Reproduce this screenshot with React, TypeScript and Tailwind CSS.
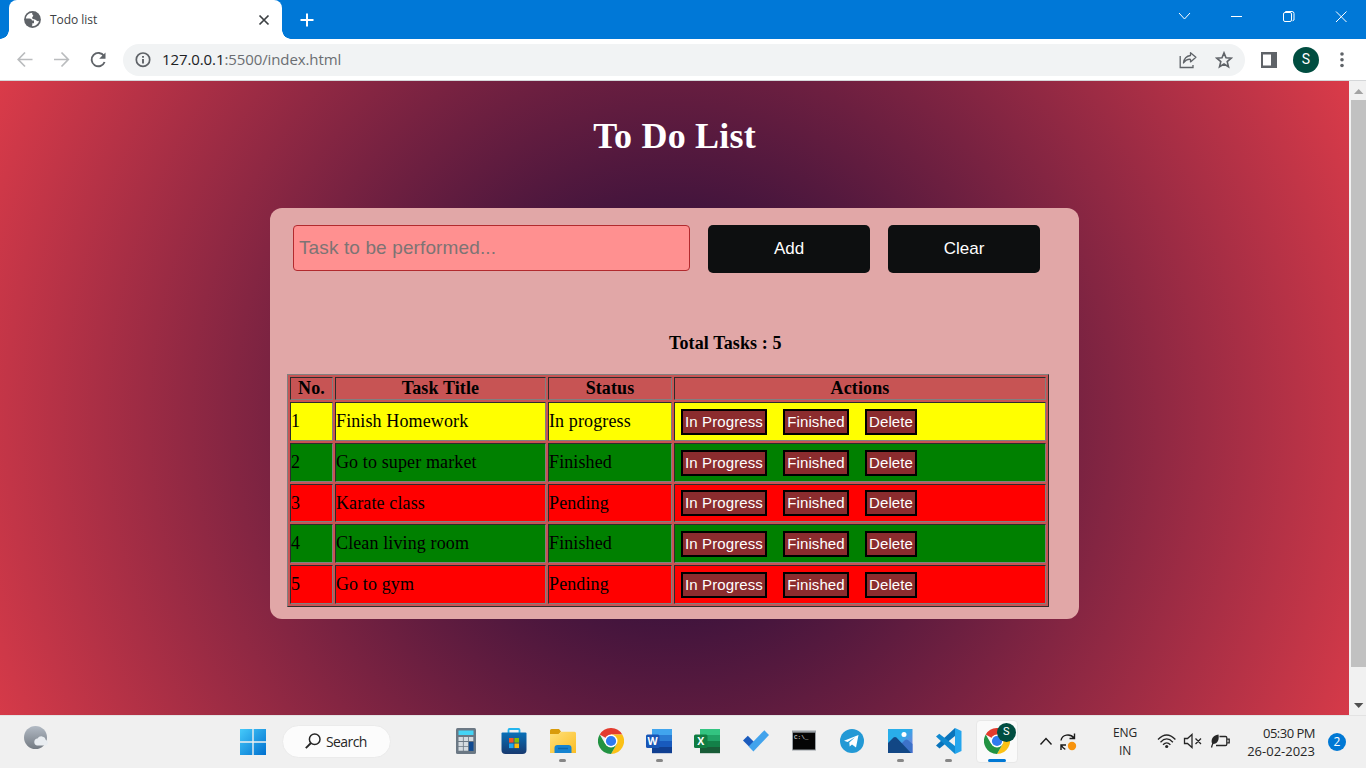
import React from "react";

const ui = "font-['Open_Sans','Noto_Sans',sans-serif]";
const serif = "font-['Liberation_Serif',serif]";
const sans = "font-['Liberation_Sans',sans-serif]";

type Status = "In progress" | "Finished" | "Pending";

const tasks: { title: string; status: Status }[] = [
  { title: "Finish Homework", status: "In progress" },
  { title: "Go to super market", status: "Finished" },
  { title: "Karate class", status: "Pending" },
  { title: "Clean living room", status: "Finished" },
  { title: "Go to gym", status: "Pending" },
];

const rowColor: Record<Status, string> = {
  "In progress": "bg-[#ffff00]",
  Finished: "bg-[#008000]",
  Pending: "bg-[#ff0000]",
};

const cellBorder =
  "border border-t-[#2c2c2c] border-l-[#2c2c2c] border-r-[#808080] border-b-[#808080]";

function TabStrip() {
  return (
    <div className="flex h-[39px] items-end bg-[#0078d7]">
      <div className="h-[9px] w-[9px] bg-[radial-gradient(circle_at_0_0,transparent_8.5px,white_9px)]" />
      <div className="flex h-full w-[273px] items-center rounded-t-[8px] bg-white pr-[12px] pl-[15px]">
        <svg width="17" height="17" viewBox="0 0 17 17">
          <circle cx="8.500" cy="8.500" r="8.400" fill="#5f6368" />
          <path
            d="M8.300 1.800C5 1.900 2.300 4.200 1.900 7.400h3.600c1.500 0 2.300.7 2.500 2.100h2v2.700H8.300v1.700c0 .7-.4 1-1 1.100 3.500.8 7-1.600 7.700-5.200-.9.700-2.400.3-3.200-.8-.9-1.200-2.900-.2-3.500-1.500-.6-1.400.6-1.800.9-2.800.3-1-1.200-.7-1.100-1.600z"
            fill="white"
          />
        </svg>
        <span className={`${ui} ml-[9px] flex-1 text-[12px] tracking-[-0.05px] text-[#3c4043]`}>Todo list</span>
        <svg width="12" height="12" viewBox="0 0 12 12" stroke="#3c4043" strokeWidth="1.700">
          <path d="M1.500 1.500l9 9M10.500 1.500l-9 9" />
        </svg>
      </div>
      <div className="h-[9px] w-[9px] bg-[radial-gradient(circle_at_9px_0,transparent_8.5px,white_9px)]" />
      <div className="flex h-full flex-1 items-center pl-[9px]">
        <svg width="14" height="14" viewBox="0 0 14 14" stroke="white" strokeWidth="2">
          <path d="M7 .5v13M.5 7h13" />
        </svg>
      </div>
      <div className="flex h-[33px] w-[188px] items-center self-start">
        <svg width="188" height="33" viewBox="0 0 188 33" fill="none" stroke="white" strokeWidth="1">
          <path d="M1 13l5.500 6L12 13" />
          <path d="M53 16.500h11" />
          <rect x="105.500" y="12.500" width="8" height="9" rx="1.500" />
          <path d="M107.500 12v-.5h6.500q2 0 2 2v6.500l-1.500.8" />
          <path d="M158 11.500l10.500 10.500M168.500 11.500l-10.500 10.500" />
        </svg>
      </div>
    </div>
  );
}

function Toolbar() {
  return (
    <div className="flex h-[42px] items-center border-b border-[#d5d7d9] bg-white pr-[18px] pl-[17px]">
      <svg className="shrink-0" width="92" height="18" viewBox="0 0 92 18" fill="none" strokeWidth="1.700">
        <path d="M15.500 8.500H1.500M8 1.500L1.200 8.500 8 15.500" stroke="#babcbe" />
        <path d="M37 8.500h14M44.500 1.500L51.300 8.500l-6.800 7" stroke="#babcbe" />
        <path d="M87 5A6.700 6.700 0 1 0 87.600 11" stroke="#5f6368" strokeWidth="1.900" />
        <path d="M88.500 1.500v6.300h-6.300z" fill="#5f6368" />
      </svg>
      <div className="ml-[14px] flex h-[32px] w-[1122px] shrink-0 items-center rounded-full bg-[#f1f3f4] pr-[12px] pl-[12px]">
        <svg width="16" height="16" viewBox="0 0 16 16" fill="none" stroke="#5f6368">
          <circle cx="8" cy="7.700" r="6.700" strokeWidth="1.700" />
          <path d="M8 6.900v4.500M8 4v1.700" strokeWidth="1.900" />
        </svg>
        <span className={`${ui} ml-[11px] flex-1 text-[15px] tracking-[-0.1px] text-[#6b6e72]`}>
          <span className="text-[#202124]">127.0.0.1</span>:5500/index.html
        </span>
        <svg width="18" height="18" viewBox="0 0 18 18" fill="none" stroke="#5f6368" strokeWidth="1.300">
          <path d="M1.200 5v11.500H14V14" />
          <path d="M11.500 1.700l5.400 4.600-5.400 4.600V8.300C8.500 8 6.500 9 4.500 12c.5-4 2.500-7 7-7.500z" strokeLinejoin="round" />
        </svg>
        <svg className="ml-[18px]" width="18" height="18" viewBox="0 0 18 18" fill="none" stroke="#5f6368" strokeWidth="1.600">
          <path d="M9 1.900l2 4.900 5.200.4-4 3.400 1.300 5.100L9 13 4.500 15.700l1.300-5.100-4-3.400 5.200-.4z" />
        </svg>
      </div>
      <svg className="ml-[16px] shrink-0" width="16" height="16" viewBox="0 0 16 16">
        <rect width="16" height="16" fill="#5f6368" />
        <rect x="2" y="2.500" width="8" height="11" fill="white" />
      </svg>
      <div className="ml-[16px] flex h-[26px] w-[26px] shrink-0 items-center justify-center rounded-full bg-[#004d40] font-['Roboto',sans-serif] text-[14px] text-white">
        S
      </div>
      <svg className="ml-[21px] shrink-0" width="4" height="16" viewBox="0 0 4 16" fill="#5f6368">
        <circle cx="2" cy="2" r="1.800" />
        <circle cx="2" cy="7.700" r="1.800" />
        <circle cx="2" cy="13.500" r="1.800" />
      </svg>
    </div>
  );
}

function TaskTable() {
  return (
    <div
      className={`${serif} ml-[17px] grid w-[762px] grid-cols-[43px_211px_124px_372px] grid-rows-[23px_39px_39px_38px_39px_39px] gap-[2px] border border-t-[#808080] border-r-[#2c2c2c] border-b-[#2c2c2c] border-l-[#808080] bg-[#c75454] p-[2px] text-[18px] tracking-[0.12px] text-black`}
    >
      {["No.", "Task Title", "Status", "Actions"].map((h) => (
        <div key={h} className={`${cellBorder} flex items-center justify-center font-bold`}>
          {h}
        </div>
      ))}
      {tasks.map((task, i) => {
        const cell = `${cellBorder} ${rowColor[task.status]} flex items-center`;
        return (
          <React.Fragment key={task.title}>
            <div className={cell}>{i + 1}</div>
            <div className={cell}>{task.title}</div>
            <div className={cell}>{task.status}</div>
            <div className={`${cell} gap-[16px] pl-[6px]`}>
              <TaskButton label="In Progress" width="w-[86px]" />
              <TaskButton label="Finished" width="w-[66px]" />
              <TaskButton label="Delete" width="w-[52px]" />
            </div>
          </React.Fragment>
        );
      })}
    </div>
  );
}

function TaskButton({ label, width }: { label: string; width: string }) {
  return (
    <button
      className={`${sans} ${width} flex h-[26px] items-center justify-center border-2 border-black bg-[#8b2c2e] pt-[1px] text-[15px] tracking-[0.1px] whitespace-nowrap text-white`}
    >
      {label}
    </button>
  );
}

function Page() {
  return (
    <div className="flex h-[634px]">
      <main className="flex w-[1349px] flex-col items-center overflow-hidden bg-[radial-gradient(circle_753px_at_674px_335px,#0a0638,#da3b49)]">
        <h1 className={`${serif} mt-[32px] h-[46px] text-[36px] leading-[46px] font-bold tracking-[0.2px] text-white`}>
          To Do List
        </h1>
        <section className="mt-[49px] h-[411px] w-[809px] rounded-[12px] bg-[#e1a7a7]">
          <div className={`${sans} flex items-start gap-[18px] pt-[17px] pl-[23px]`}>
            <input
              className="h-[46px] w-[397px] rounded-[4px] border border-[#b22a2e] bg-[#ff9090] px-[5px] text-[19px] tracking-[0.12px] placeholder:text-[#7d7474]"
              placeholder="Task to be performed..."
            />
            <button className="h-[48px] w-[162px] rounded-[5px] bg-[#0d0f10] text-[17px] text-white">Add</button>
            <button className="h-[48px] w-[152px] rounded-[5px] bg-[#0d0f10] text-[17px] text-white">Clear</button>
          </div>
          <p className={`${serif} mt-[59px] mb-[19px] pl-[399px] text-[18px] leading-[23px] font-bold tracking-[0.12px]`}>
            Total Tasks : 5
          </p>
          <TaskTable />
        </section>
      </main>
      <div className="flex w-[17px] flex-col bg-[#f1f1f1] pl-[2px]">
        <svg width="15" height="19" viewBox="0 0 15 19" fill="#a3a3a3">
          <path d="M3 13l4.700-5 4.700 5z" />
        </svg>
        <div className="h-[567px] bg-[#c1c1c1]" />
        <svg className="mt-[31px]" width="15" height="15" viewBox="0 0 15 15" fill="#505050">
          <path d="M3 5l4.700 5 4.700-5z" />
        </svg>
      </div>
    </div>
  );
}

function ChromeIcon() {
  return (
    <svg width="26" height="26" viewBox="0 0 26 26">
      <path d="M13 13L1.740 6.500A13 13 0 0 1 24.260 6.500L13 6.500z" fill="#e33b2e" />
      <path d="M24.260 6.500A13 13 0 0 1 13 26l5.600-9.800L13 6.500z" fill="#fbc116" />
      <path d="M1.740 6.500A13 13 0 0 0 13 26l5.600-9.800L13 13 7.400 16.200z" fill="#229342" />
      <circle cx="13" cy="13" r="6.500" fill="white" />
      <circle cx="13" cy="13" r="5.100" fill="#2f7bf0" />
    </svg>
  );
}

function OfficeIcon({ letter, shades, badge }: { letter: string; shades: string[]; badge: string }) {
  return (
    <svg width="26" height="26" viewBox="0 0 26 26">
      {shades.map((s, i) => (
        <rect key={s} x="6" y={1 + i * 6} width="20" height="6.200" fill={s} />
      ))}
      <rect x="0" y="6.500" width="13.500" height="13.500" rx="1.500" fill={badge} />
      <text x="6.700" y="17" fill="white" fontFamily="Open Sans" fontSize="10.500" fontWeight="700" textAnchor="middle">
        {letter}
      </text>
    </svg>
  );
}

const apps: { id: string; icon: React.ReactNode; open?: boolean }[] = [
  {
    id: "calculator",
    icon: (
      <svg width="26" height="26" viewBox="0 0 26 26">
        <rect x="3" width="20" height="26" rx="1.500" fill="#6b7884" />
        <rect x="5.500" y="2.500" width="15" height="4.500" fill="#45d4f5" />
        <g fill="#d5dbe0">
          <path d="M5.500 9h4.400v4H5.500zM10.700 9h4.400v4h-4.400zM15.900 9h4.400v4h-4.400zM5.500 13.900h4.400v4H5.500zM10.700 13.900h4.400v4h-4.400zM5.500 18.800h4.400v4H5.500zM10.700 18.800h4.400v4h-4.400z" />
        </g>
        <rect x="15.900" y="13.900" width="4.600" height="9" fill="#104a91" />
      </svg>
    ),
  },
  {
    id: "store",
    icon: (
      <svg width="26" height="26" viewBox="0 0 26 26">
        <defs>
          <linearGradient id="store" x2="0" y2="1">
            <stop stopColor="#0870b8" />
            <stop offset="1" stopColor="#183a70" />
          </linearGradient>
        </defs>
        <path d="M7.500 5V2q0-1 1-1h9q1 0 1 1v3" stroke="#23b5ee" strokeWidth="1.800" fill="none" />
        <path d="M.5 5.500q0-1 1-1h23q1 0 1 1V22q0 4-4 4h-17q-4 0-4-4z" fill="url(#store)" />
        <path d="M8 10h4.600v4.600H8z" fill="#f35325" />
        <path d="M13.400 10H18v4.600h-4.600z" fill="#81bc06" />
        <path d="M8 15.500h4.600v4.600H8z" fill="#20a7ee" />
        <path d="M13.400 15.500H18v4.600h-4.600z" fill="#ffba08" />
      </svg>
    ),
  },
  {
    id: "explorer",
    open: true,
    icon: (
      <svg width="26" height="26" viewBox="0 0 26 26">
        <defs>
          <linearGradient id="folder" x2="1" y2="1">
            <stop stopColor="#ffe07a" />
            <stop offset="1" stopColor="#fbbd24" />
          </linearGradient>
        </defs>
        <path d="M0 2.500Q0 1 1.500 1H9l2 2.500L9 6H0z" fill="#d99b0b" />
        <path d="M0 6h8.500l2.500-2.200h13.500Q26 3.800 26 5.300V25H0z" fill="url(#folder)" />
        <path d="M4.500 25v-5q0-3 3-3h11q3 0 3 3v5z" fill="#1583d0" />
        <path d="M8 20.500h10" stroke="#0c66aa" strokeWidth="1.500" />
      </svg>
    ),
  },
  { id: "chrome", icon: <ChromeIcon /> },
  {
    id: "word",
    open: true,
    icon: <OfficeIcon letter="W" badge="#1855b5" shades={["#41a5ee", "#2b7cd3", "#185abd", "#103f91"]} />,
  },
  {
    id: "excel",
    icon: <OfficeIcon letter="X" badge="#107c41" shades={["#33c481", "#21a366", "#138048", "#185c37"]} />,
  },
  {
    id: "todo",
    icon: (
      <svg width="26" height="26" viewBox="0 0 26 26">
        <path d="M0 12.600l4.800-4.800 6.500 6.500-4.800 4.800z" fill="#1b5bbd" />
        <path d="M5.600 18.600L21.300 2.300 26 7.100 10.400 23.400z" fill="#42a3ec" />
      </svg>
    ),
  },
  {
    id: "terminal",
    icon: (
      <svg width="26" height="26" viewBox="0 0 26 26">
        <rect x="1" y="2.500" width="24" height="20" fill="#9aa0a5" />
        <rect x="2" y="4.700" width="22" height="16.800" fill="#050505" />
        <text x="3" y="10.500" fill="#eee" fontFamily="Liberation Mono" fontSize="6">
          C:\_
        </text>
      </svg>
    ),
  },
  {
    id: "telegram",
    icon: (
      <svg width="26" height="26" viewBox="0 0 26 26">
        <circle cx="13" cy="13" r="12" fill="#2399d5" />
        <path d="M5 12.800l14.500-5.700-2.500 12.300-4-3-2.300 2.200-.4-4.200 5.700-5.200-7.400 4.700z" fill="white" />
      </svg>
    ),
  },
  {
    id: "photos",
    open: true,
    icon: (
      <svg width="26" height="26" viewBox="0 0 26 26">
        <defs>
          <linearGradient id="sky" x2="1" y2="1">
            <stop offset=".4" stopColor="#29aeea" />
            <stop offset="1" stopColor="#8d70d7" />
          </linearGradient>
        </defs>
        <path d="M1 1h24.500v24H1z" fill="url(#sky)" />
        <path d="M12 18l6-6q1.500-1 3 0l4.500 4v9H12z" fill="#3d72c9" />
        <path d="M1 15l5.500-5.500q1.500-1 3 0L24 25H1z" fill="#124785" />
        <circle cx="17" cy="6.500" r="2.500" fill="white" />
      </svg>
    ),
  },
  {
    id: "code",
    open: true,
    icon: (
      <svg width="26" height="26" viewBox="0 0 26 26">
        <path d="M0 17.500L19 0v8L3.500 20.500z" fill="#0873bb" />
        <path d="M0 8.500l3.300-2.800L19 18v8z" fill="#1089d0" />
        <path d="M19 0l6.500 3v20L19 26z" fill="#24a5ed" />
      </svg>
    ),
  },
];

function Taskbar() {
  return (
    <footer className={`${ui} flex h-[53px] items-center border-t border-[#e3e3e3] bg-[#f0f0f0] text-[#262626]`}>
      <div className="flex w-[240px] self-start pt-[10px] pl-[23px]">
        <svg width="26" height="24" viewBox="0 0 26 24">
          <defs>
            <linearGradient id="moon" x2="0" y2="1">
              <stop stopColor="#b2bac4" />
              <stop offset="1" stopColor="#747b83" />
            </linearGradient>
          </defs>
          <circle cx="12.500" cy="11.500" r="11.500" fill="url(#moon)" />
          <path d="M14 19.500a3.500 3.500 0 0 1 .5-6.900 4.500 4.500 0 0 1 8.300 1.300 2.900 2.900 0 0 1 .2 5.600z" fill="#e9edf1" />
        </svg>
      </div>
      <svg className="mb-[1px]" width="26" height="26" viewBox="0 0 26 26">
        <defs>
          <linearGradient id="win" x2="1" y2="1">
            <stop stopColor="#45cafa" />
            <stop offset="1" stopColor="#0070cf" />
          </linearGradient>
        </defs>
        <path d="M0 0h12.300v12.300H0zM13.700 0H26v12.300H13.700zM0 13.700h12.300V26H0zM13.700 13.700H26V26H13.700z" fill="url(#win)" />
      </svg>
      <div className="mb-[2px] ml-[16px] flex h-[33px] w-[109px] items-center rounded-full border border-[#ebebeb] bg-[#fcfcfc] pl-[22px] text-[14px] tracking-[-0.6px]">
        <svg className="mr-[5px]" width="16" height="16" viewBox="0 0 16 16" fill="none" stroke="#262626" strokeWidth="1.500">
          <circle cx="9.700" cy="6.200" r="5.300" />
          <path d="M6 10L.8 15.200" strokeWidth="1.900" />
        </svg>
        Search
      </div>
      <div className="ml-[51px] grid h-full w-[579px] grid-cols-12">
        {apps.map((app) => (
          <div key={app.id} className="flex flex-col items-center pt-[12px]">
            {app.icon}
            {app.open && <div className="mt-[5px] h-[3px] w-[7px] rounded-full bg-[#868686]" />}
          </div>
        ))}
        <div className="relative mx-auto mt-[4px] flex h-[43px] w-[42px] flex-col items-center rounded-[4px] border border-[#e8e8e8] bg-[#fafafa] pt-[7px]">
          <ChromeIcon />
          <div className="mt-[5px] h-[3px] w-[18px] shrink-0 rounded-full bg-[#0078d4]" />
          <div className="absolute top-[2px] left-[20px] flex h-[19px] w-[19px] items-center justify-center rounded-full bg-[#004d40] font-['Roboto',sans-serif] text-[11px] text-white">
            S
          </div>
        </div>
      </div>
      <svg className="ml-[18px]" width="40" height="22" viewBox="0 0 40 22" fill="none" stroke="#1c1c1c" strokeWidth="1.400">
        <path d="M1.500 13.500l5.500-6 5.500 6" />
        <path d="M22 9.500c1-6 9-7.500 13-2.500M35.500 2.500v5h-5M22 19v-5h5M22.300 14.300c1 2 2 3.200 4 4" />
        <circle cx="33" cy="15" r="4.200" fill="#f7930d" stroke="none" />
      </svg>
      <div className="ml-[25px] w-[42px] text-center text-[12px] leading-[18px] tracking-[-0.1px]">
        ENG
        <br />
        IN
      </div>
      <svg className="mb-[2px] ml-[11px]" width="74" height="20" viewBox="0 0 74 20" fill="none" stroke="#262626" strokeWidth="1.300">
        <path d="M1 8.500q8.700-9 17.400 0M3.500 11.200q6.200-6.500 12.400 0M6 13.800q3.700-3.800 7.400 0" />
        <circle cx="9.700" cy="15.500" r="1.600" fill="#262626" stroke="none" />
        <path d="M27.500 7.500h3l4.500-4v13l-4.500-4h-3zM38.500 7.500l5.500 5.500M44 7.500L38.500 13" />
        <path d="M62.500 5.500h6q1.300 0 1.300 1.300v6.400q0 1.300-1.300 1.300H59M70.500 8.200h1.700v3.600h-1.700" />
        <path d="M54.500 16.500c.4-2 .8-3 1.500-4.300" />
        <path d="M55.300 13c-2-4 .3-8.800 6.200-9.500 .8 5-.5 9.800-6.200 9.500z" fill="#262626" stroke="none" />
      </svg>
      <div className="mb-[1px] ml-[1px] w-[83px] text-right text-[13px] leading-[18px] tracking-[0px] whitespace-nowrap">
        <span className="tracking-[-0.5px]">05:30 PM</span>
        <br />
        26-02-2023
      </div>
      <div className="ml-[13px] flex h-[18px] w-[18px] items-center justify-center rounded-full bg-[#0078d4] text-[12px] text-white">
        2
      </div>
    </footer>
  );
}

export default function App() {
  return (
    <div className="flex h-[768px] w-[1366px] flex-col overflow-hidden">
      <TabStrip />
      <Toolbar />
      <Page />
      <Taskbar />
    </div>
  );
}
